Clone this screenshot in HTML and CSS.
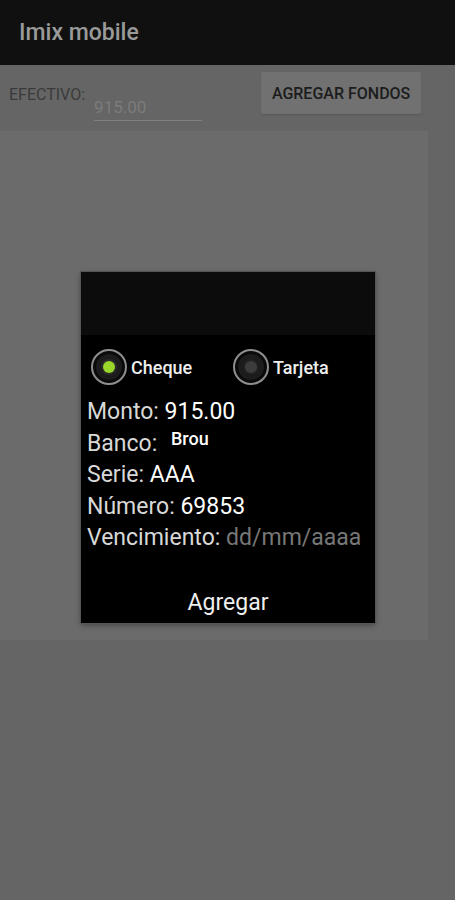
FILE: index.html
```html
<!DOCTYPE html>
<html lang="es">
<head>
  <meta charset="UTF-8" />
  <meta name="viewport" content="width=device-width, initial-scale=1.0"/>
  <title>Imix mobile</title>
  <link rel="stylesheet" href="styles.css">
</head>
<body>
  <header class="appbar">
    <h1>Imix mobile</h1>
  </header>

  <main class="screen">
    <div class="funds-row">
      <span class="funds-label">EFECTIVO:</span>
      <span class="funds-input">915.00</span>
      <button class="funds-btn">AGREGAR FONDOS</button>
    </div>
    <div class="panel"></div>
  </main>

  <div class="dialog">
    <div class="dialog-title"></div>
    <div class="dialog-body">
      <div class="radio-row">
        <label class="radio">
          <span class="radio-dot checked"></span>
          <span class="radio-text">Cheque</span>
        </label>
        <label class="radio">
          <span class="radio-dot"></span>
          <span class="radio-text">Tarjeta</span>
        </label>
      </div>

      <div class="fields">
        <div class="field">Monto: <span class="value">915.00</span></div>
        <div class="field">Banco: <span class="value small">Brou</span></div>
        <div class="field">Serie: <span class="value">AAA</span></div>
        <div class="field">Número: <span class="value">69853</span></div>
        <div class="field">Vencimiento: <span class="hint">dd/mm/aaaa</span></div>
      </div>
    </div>
    <div class="dialog-action">Agregar</div>
  </div>
</body>
</html>
```

FILE: styles.css
```css
:root {
  --dim-bg: #656565;
  --panel: #6b6b6b;
  --bar: #101010;
}

body {
  font-family: Roboto, 'Noto Sans', sans-serif;
  margin: 0;
  padding: 0;
  background-color: var(--dim-bg);
  width: 455px;
  height: 900px;
  overflow: hidden;
}

.appbar {
  background-color: var(--bar);
  height: 65px;
  display: flex;
  align-items: center;
  padding-left: 19px;
}

.appbar h1 {
  margin: 0;
  font-size: 23px;
  font-weight: 500;
  color: #9a9a9a;
}

.funds-row {
  height: 66px;
  display: flex;
  align-items: flex-start;
}

.funds-label {
  margin: 20px 0 0 9px;
  font-size: 16px;
  color: #3a3a3a;
}

.funds-input {
  margin: 32px 0 0 9px;
  width: 108px;
  font-size: 17px;
  color: #7c7c7c;
  padding-bottom: 2px;
  border-bottom: 1px solid #808080;
  height: 21px;
}

.funds-btn {
  margin: 7px 0 0 59px;
  width: 160px;
  height: 42px;
  border: none;
  border-radius: 2px;
  background-color: #717171;
  color: #1c1c1c;
  font-family: Roboto, sans-serif;
  font-size: 16px;
  font-weight: 500;
  padding: 0;
  box-shadow: 0 1px 2px rgba(0,0,0,0.15);
}

.panel {
  width: 428px;
  height: 509px;
  background-color: var(--panel);
}

.dialog {
  position: absolute;
  left: 81px;
  top: 272px;
  width: 294px;
  height: 351px;
  background-color: #000;
  display: flex;
  flex-direction: column;
  box-shadow: 0 0 0 1px #555, 0 2px 6px rgba(0,0,0,0.4);
}

.dialog-title {
  height: 63px;
  background-color: #0c0c0c;
}

.dialog-body {
  padding: 14px 0 0 6px;
  flex: 1;
}

.radio-row {
  display: flex;
  height: 36px;
  align-items: center;
}

.radio {
  display: flex;
  align-items: center;
  gap: 4px;
  width: 138px;
  margin-left: 4px;
}

.radio-dot {
  width: 36px;
  height: 36px;
  border-radius: 50%;
  border: 2px solid #8e8e8e;
  background-color: #1c1c1c;
  box-shadow: inset 0 0 0 3px #0a0a0a;
  display: flex;
  align-items: center;
  justify-content: center;
  box-sizing: border-box;
}

.radio-dot::after {
  content: "";
  width: 12px;
  height: 12px;
  border-radius: 50%;
  background-color: #3c3c3c;
  box-shadow: 0 0 3px #333;
}

.radio-dot.checked::after {
  background-color: #9ad62a;
  box-shadow: 0 0 0 2px #2a2a2a;
}

.radio-text {
  color: #eee;
  font-size: 18px;
  font-weight: 500;
}

.fields {
  margin-top: 11px;
}

.field {
  color: #d8d8d8;
  font-size: 23px;
  line-height: 31.5px;
}

.value {
  color: #fff;
}

.value.small {
  font-size: 18px;
  font-weight: 500;
  line-height: 16px;
  vertical-align: 6px;
  margin-left: 8px;
}

.hint {
  color: #777;
}

.dialog-action {
  height: 52px;
  color: #eee;
  font-size: 23px;
  text-align: center;
  line-height: 64px;
}
```
